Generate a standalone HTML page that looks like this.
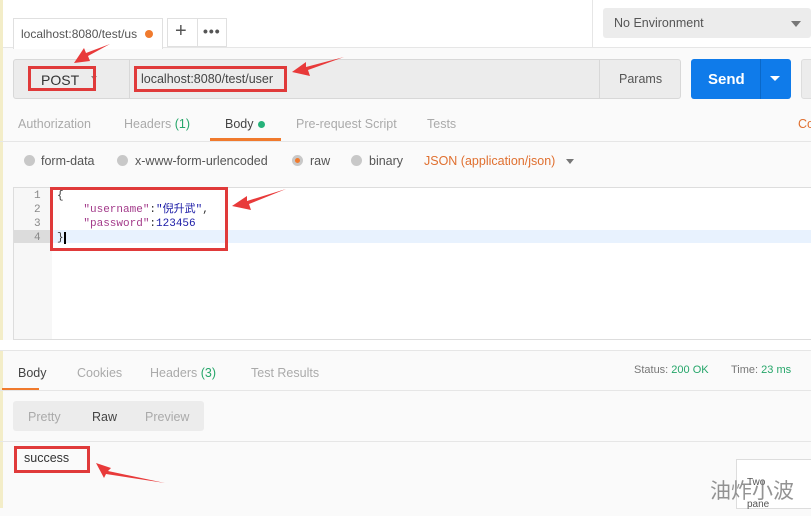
<!DOCTYPE html>
<html><head><meta charset="utf-8"><style>
*{box-sizing:border-box;margin:0;padding:0}
body{width:811px;height:508px;overflow:hidden;background:#fafafa;font-family:"Liberation Sans","Noto Sans CJK SC",sans-serif;font-size:12.5px;color:#505050;position:relative}
.a{position:absolute}
.mono{font-family:"Liberation Mono","Noto Sans CJK SC",monospace;font-size:11px}
.red{position:absolute;border:3px solid #e03a3a}
</style></head><body>
<div class="a" style="left:0;top:0;width:811px;height:48px;background:#fff;border-bottom:1px solid #e6e6e6"></div>
<div class="a" style="left:0;top:0;width:3px;height:508px;background:#f3edc8"></div>
<div class="a" style="left:13px;top:18px;width:150px;height:31px;background:#fff;border:1px solid #e0e0e0;border-bottom:none"></div>
<div class="a" style="left:21px;top:27px;font-size:12px;color:#555">localhost:8080/test/us</div>
<div class="a" style="left:145px;top:30px;width:8px;height:8px;border-radius:50%;background:#f07a2d"></div>
<div class="a" style="left:167px;top:18px;width:60px;height:29px;background:#fff;border:1px solid #e0e0e0"></div>
<div class="a" style="left:197px;top:18px;width:1px;height:29px;background:#e0e0e0"></div>
<div class="a" style="left:175px;top:20px;font-size:20px;color:#555">+</div>
<div class="a" style="left:203px;top:23px;font-size:14px;color:#555;font-weight:bold;letter-spacing:1px">•••</div>
<div class="a" style="left:592px;top:0;width:1px;height:48px;background:#e6e6e6"></div>
<div class="a" style="left:603px;top:8px;width:208px;height:30px;background:#ececec;border-radius:3px"></div>
<div class="a" style="left:614px;top:16px;font-size:12.5px;color:#555">No Environment</div>
<div class="a" style="left:791px;top:21px;border:5px solid transparent;border-top:6px solid #777"></div>

<div class="a" style="left:13px;top:59px;width:668px;height:40px;background:#ececec;border:1px solid #d8d8d8;border-radius:3px"></div>
<div class="a" style="left:129px;top:59px;width:1px;height:40px;background:#d8d8d8"></div>
<div class="a" style="left:599px;top:59px;width:1px;height:40px;background:#d8d8d8"></div>
<div class="a" style="left:41px;top:72px;font-size:14px;color:#333">POST</div>
<div class="a" style="left:91px;top:76px;border:3px solid transparent;border-top:4px solid #888"></div>
<div class="a" style="left:141px;top:72px;font-size:12.5px;color:#444">localhost:8080/test/user</div>
<div class="a" style="left:619px;top:72px;font-size:12.5px;color:#555">Params</div>
<div class="a" style="left:691px;top:59px;width:100px;height:40px;background:#0f7bea;border-radius:3px"></div>
<div class="a" style="left:760px;top:59px;width:1px;height:40px;background:#0a68c8"></div>
<div class="a" style="left:708px;top:71px;font-size:15px;font-weight:bold;color:#fff">Send</div>
<div class="a" style="left:770px;top:76px;border:5px solid transparent;border-top:5px solid #fff"></div>
<div class="a" style="left:801px;top:59px;width:20px;height:40px;background:#ececec;border-radius:3px;border:1px solid #ddd"></div>

<div class="a" style="left:18px;top:117px;color:#aaa">Authorization</div>
<div class="a" style="left:124px;top:117px;color:#aaa">Headers <span style="color:#26a66a">(1)</span></div>
<div class="a" style="left:225px;top:117px;color:#444">Body</div>
<div class="a" style="left:258px;top:121px;width:7px;height:7px;border-radius:50%;background:#26b27a"></div>
<div class="a" style="left:210px;top:138px;width:71px;height:3px;background:#f07a2d"></div>
<div class="a" style="left:296px;top:117px;color:#aaa">Pre-request Script</div>
<div class="a" style="left:427px;top:117px;color:#aaa">Tests</div>
<div class="a" style="left:798px;top:117px;color:#e07030">Co</div>
<div class="a" style="left:0;top:141px;width:811px;height:1px;background:#e6e6e6"></div>

<div class="a" style="left:24px;top:155px;width:11px;height:11px;border-radius:50%;background:#c8c8c8"></div>
<div class="a" style="left:41px;top:154px;color:#555">form-data</div>
<div class="a" style="left:117px;top:155px;width:11px;height:11px;border-radius:50%;background:#c8c8c8"></div>
<div class="a" style="left:135px;top:154px;color:#555">x-www-form-urlencoded</div>
<div class="a" style="left:292px;top:155px;width:11px;height:11px;border-radius:50%;background:#c8c8c8;border:3px solid #c8c8c8"><div style="width:5px;height:5px;border-radius:50%;background:#f07a2d"></div></div>
<div class="a" style="left:310px;top:154px;color:#555">raw</div>
<div class="a" style="left:351px;top:155px;width:11px;height:11px;border-radius:50%;background:#c8c8c8"></div>
<div class="a" style="left:369px;top:154px;color:#555">binary</div>
<div class="a" style="left:424px;top:154px;color:#e07030">JSON (application/json)</div>
<div class="a" style="left:566px;top:159px;border:4px solid transparent;border-top:5px solid #777"></div>

<div class="a" style="left:13px;top:187px;width:800px;height:153px;background:#fff;border:1px solid #ddd"></div>
<div class="a" style="left:14px;top:188px;width:38px;height:151px;background:#f7f7f7"></div>
<div class="a" style="left:14px;top:230px;width:38px;height:13px;background:#dcdcdc"></div>
<div class="a" style="left:52px;top:230px;width:760px;height:13px;background:#e8f2fe"></div>
<div class="a mono" style="left:34px;top:189px;line-height:14px;color:#888;text-align:right">1<br>2<br>3<br>4</div>
<div class="a mono" style="left:57px;top:189px;line-height:14px;color:#333;white-space:pre">{
    <span style="color:#a33a8a">"username"</span>:<span style="color:#1a1aa6">"倪升武"</span>,
    <span style="color:#a33a8a">"password"</span>:<span style="color:#1a1aa6">123456</span>
}<span style="border-left:2px solid #000"></span></div>

<div class="a" style="left:0;top:340px;width:811px;height:10px;background:#fff"></div>
<div class="a" style="left:0;top:350px;width:811px;height:1px;background:#e6e6e6"></div>
<div class="a" style="left:18px;top:366px;color:#444">Body</div>
<div class="a" style="left:77px;top:366px;color:#aaa">Cookies</div>
<div class="a" style="left:150px;top:366px;color:#aaa">Headers <span style="color:#26a66a">(3)</span></div>
<div class="a" style="left:251px;top:366px;color:#aaa">Test Results</div>
<div class="a" style="left:634px;top:364px;font-size:11px;color:#777">Status: <span style="color:#26a66a">200 OK</span></div>
<div class="a" style="left:731px;top:364px;font-size:11px;color:#777">Time: <span style="color:#26a66a">23 ms</span></div>
<div class="a" style="left:2px;top:388px;width:37px;height:3px;background:#f07a2d"></div>
<div class="a" style="left:0;top:390px;width:811px;height:1px;background:#e6e6e6"></div>
<div class="a" style="left:13px;top:401px;width:191px;height:30px;background:#ececec;border-radius:3px"></div>
<div class="a" style="left:28px;top:410px;color:#aaa">Pretty</div>
<div class="a" style="left:92px;top:410px;color:#444">Raw</div>
<div class="a" style="left:145px;top:410px;color:#aaa">Preview</div>
<div class="a" style="left:0;top:441px;width:811px;height:1px;background:#e6e6e6"></div>
<div class="a" style="left:24px;top:451px;color:#333">success</div>
<div class="a" style="left:736px;top:459px;width:80px;height:50px;background:#fff;border:1px solid #ddd"></div>
<div class="a" style="left:747px;top:472px;font-size:10px;color:#555;line-height:22px">Two<br>pane</div>
<div class="a" style="left:710px;top:475px;font-size:21px;color:rgba(120,120,120,.8)">油炸小波</div>

<div class="red" style="left:28px;top:66px;width:68px;height:25px"></div>
<div class="red" style="left:134px;top:66px;width:153px;height:26px"></div>
<div class="red" style="left:50px;top:187px;width:178px;height:64px"></div>
<div class="red" style="left:14px;top:446px;width:76px;height:27px"></div>
<svg class="a" style="left:0;top:0" width="811" height="508">
<g fill="#e83a3a">
<polygon points="74,63 84,48 86,53 110,44 88,56 90,61"/>
<polygon points="292,72 306,62 306,67 344,57 308,70 310,76"/>
<polygon points="232,206 247,196 247,201 286,189 249,204 251,210"/>
<polygon points="96,463 111,468 108,471 165,483 106,474 104,478"/>
</g></svg>
</body></html>
